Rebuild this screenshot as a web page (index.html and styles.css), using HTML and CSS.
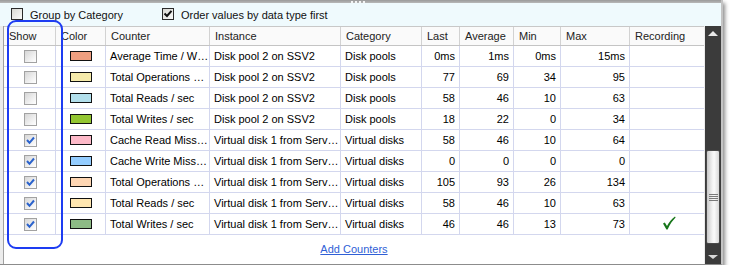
FILE: index.html
```html
<!DOCTYPE html>
<html>
<head>
<meta charset="utf-8">
<link rel="stylesheet" href="styles.css">
</head>
<body>
<div class="window">
  <div class="topbar"><span class="grip"><i></i><i></i><i></i><i></i></span></div>
  <div class="options">
    <label class="opt"><span class="ocb"></span>Group by Category</label>
    <label class="opt opt2"><span class="ocb"><svg width="10" height="10" viewBox="0 0 10 10"><path d="M1.5 4.5 L4 7 L8.5 1.8" fill="none" stroke="#111" stroke-width="2"/></svg></span>Order values by data type first</label>
  </div>
  <div class="main">
    <div class="grid">
      <div class="row head">
        <div class="c">Show</div><div class="c">Color</div><div class="c">Counter</div><div class="c">Instance</div><div class="c">Category</div><div class="c">Last</div><div class="c">Average</div><div class="c">Min</div><div class="c">Max</div><div class="c">Recording</div>
      </div>
      <div class="row">
        <div class="c show"><span class="cb"></span></div><div class="c color"><span class="sw sw1"></span></div><div class="c">Average Time / W…</div><div class="c">Disk pool 2 on SSV2</div><div class="c">Disk pools</div><div class="c n">0ms</div><div class="c n">1ms</div><div class="c n">0ms</div><div class="c n">15ms</div><div class="c"></div>
      </div>
      <div class="row">
        <div class="c show"><span class="cb"></span></div><div class="c color"><span class="sw sw2"></span></div><div class="c">Total Operations …</div><div class="c">Disk pool 2 on SSV2</div><div class="c">Disk pools</div><div class="c n">77</div><div class="c n">69</div><div class="c n">34</div><div class="c n">95</div><div class="c"></div>
      </div>
      <div class="row">
        <div class="c show"><span class="cb"></span></div><div class="c color"><span class="sw sw3"></span></div><div class="c">Total Reads / sec</div><div class="c">Disk pool 2 on SSV2</div><div class="c">Disk pools</div><div class="c n">58</div><div class="c n">46</div><div class="c n">10</div><div class="c n">63</div><div class="c"></div>
      </div>
      <div class="row">
        <div class="c show"><span class="cb"></span></div><div class="c color"><span class="sw sw4"></span></div><div class="c">Total Writes / sec</div><div class="c">Disk pool 2 on SSV2</div><div class="c">Disk pools</div><div class="c n">18</div><div class="c n">22</div><div class="c n">0</div><div class="c n">34</div><div class="c"></div>
      </div>
      <div class="row">
        <div class="c show"><span class="cb on"><svg width="11" height="11" viewBox="0 0 11 11"><path d="M2 5 L4.5 7.8 L9 2.5" fill="none" stroke="#2a62cc" stroke-width="2"/></svg></span></div><div class="c color"><span class="sw sw5"></span></div><div class="c">Cache Read Miss…</div><div class="c">Virtual disk 1 from Serv…</div><div class="c">Virtual disks</div><div class="c n">58</div><div class="c n">46</div><div class="c n">10</div><div class="c n">64</div><div class="c"></div>
      </div>
      <div class="row">
        <div class="c show"><span class="cb on"><svg width="11" height="11" viewBox="0 0 11 11"><path d="M2 5 L4.5 7.8 L9 2.5" fill="none" stroke="#2a62cc" stroke-width="2"/></svg></span></div><div class="c color"><span class="sw sw6"></span></div><div class="c">Cache Write Miss…</div><div class="c">Virtual disk 1 from Serv…</div><div class="c">Virtual disks</div><div class="c n">0</div><div class="c n">0</div><div class="c n">0</div><div class="c n">0</div><div class="c"></div>
      </div>
      <div class="row">
        <div class="c show"><span class="cb on"><svg width="11" height="11" viewBox="0 0 11 11"><path d="M2 5 L4.5 7.8 L9 2.5" fill="none" stroke="#2a62cc" stroke-width="2"/></svg></span></div><div class="c color"><span class="sw sw7"></span></div><div class="c">Total Operations …</div><div class="c">Virtual disk 1 from Serv…</div><div class="c">Virtual disks</div><div class="c n">105</div><div class="c n">93</div><div class="c n">26</div><div class="c n">134</div><div class="c"></div>
      </div>
      <div class="row">
        <div class="c show"><span class="cb on"><svg width="11" height="11" viewBox="0 0 11 11"><path d="M2 5 L4.5 7.8 L9 2.5" fill="none" stroke="#2a62cc" stroke-width="2"/></svg></span></div><div class="c color"><span class="sw sw8"></span></div><div class="c">Total Reads / sec</div><div class="c">Virtual disk 1 from Serv…</div><div class="c">Virtual disks</div><div class="c n">58</div><div class="c n">46</div><div class="c n">10</div><div class="c n">63</div><div class="c"></div>
      </div>
      <div class="row">
        <div class="c show"><span class="cb on"><svg width="11" height="11" viewBox="0 0 11 11"><path d="M2 5 L4.5 7.8 L9 2.5" fill="none" stroke="#2a62cc" stroke-width="2"/></svg></span></div><div class="c color"><span class="sw sw9"></span></div><div class="c">Total Writes / sec</div><div class="c">Virtual disk 1 from Serv…</div><div class="c">Virtual disks</div><div class="c n">46</div><div class="c n">46</div><div class="c n">13</div><div class="c n">73</div><div class="c rec"><svg width="14" height="14" viewBox="0 0 14 14"><path d="M1 7.6 L2.8 6.6 L5 10 C7 6.2 9.6 3 13 0.6 L13.6 1.4 C10.6 4.4 8 8 5.6 13.4 L4.4 13.4 Z" fill="#17761a"/></svg></div>
      </div>
      <div class="footer"><a href="#">Add Counters</a></div>
    </div>
    <div class="scrollbar">
      <div class="sb-btn"><span class="tri up"></span></div>
      <div class="sb-track"><div class="thumb"><span class="gripl"></span></div></div>
      <div class="sb-btn"><span class="tri down"></span></div>
    </div>
  </div>
  <div class="highlight"></div>
</div>
</body>
</html>
```

FILE: styles.css
```css
* { box-sizing: border-box; }
html, body { margin: 0; padding: 0; background: #fff; }
body {
  font-family: "Liberation Sans", Arial, sans-serif;
  font-size: 11px;
  color: #000;
}
.window {
  position: relative;
  width: 723px;
  height: 265px;
  background: #ececec;
  border-right: 2px solid #c4c4c4;
  border-bottom: 1px solid #8c8c8c;
  box-shadow: 2px 3px 4px rgba(0,0,0,0.45);
  display: flex;
  flex-direction: column;
}
.topbar {
  height: 3px;
  background: linear-gradient(#9a9a9a, #b8b8b8);
  display: flex;
  justify-content: center;
}
.grip {
  display: flex;
  gap: 2px;
  padding-top: 1px;
  margin-left: -6px;
}
.grip i {
  display: block;
  width: 2px;
  height: 2px;
  background: #f4f4f4;
}
.options {
  height: 23px;
  background: #effafd;
  display: flex;
  align-items: center;
  padding-left: 11px;
  padding-top: 1px;
}
.opt {
  display: flex;
  align-items: center;
  gap: 7px;
  color: #111;
}
.opt2 { margin-left: 39px; }
.ocb {
  width: 12px;
  height: 12px;
  border: 1px solid #2a2a2a;
  background: linear-gradient(135deg, #d8d8d2, #fafafa);
  display: flex;
  align-items: center;
  justify-content: center;
  margin-top: -3px;
}
.main {
  display: flex;
  height: 238px;
  padding-left: 3px;
}
.grid {
  width: 701px;
  border-left: 1px solid #a0a0a0;
  background: #fff;
  display: flex;
  flex-direction: column;
}
.row {
  display: grid;
  grid-template-columns: 52px 50px 104px 131px 81px 38px 54px 47px 69px 74px;
  height: 21px;
  border-bottom: 1px solid #d3d7ee;
}
.row.head {
  height: 20px;
  background: #fafafa;
  border-top: 1px solid #c8c8c8;
  border-bottom: 1px solid #c4c4c4;
  color: #222;
}
.c {
  border-right: 1px solid #d3d7ee;
  padding: 0 4px;
  line-height: 20px;
  white-space: nowrap;
  overflow: hidden;
}
.head .c {
  border-right-color: #d2d2d2;
  line-height: 18px;
  padding-left: 5px;
}
.c:last-child { border-right: none; }
.c.n { text-align: right; }
.c.show, .c.color, .c.rec {
  display: flex;
  align-items: center;
  justify-content: center;
}
.c.show { padding-left: 6px; }
.cb {
  width: 13px;
  height: 13px;
  border: 1px solid #a2a2a2;
  background: linear-gradient(135deg, #d6d6d6, #f4f4f4 70%, #fff);
  display: flex;
  align-items: center;
  justify-content: center;
}
.sw {
  width: 22px;
  height: 10px;
  border: 1px solid #111;
  margin-left: 1px;
}
.sw1 { background: #ee9f80; }
.sw2 { background: #f5eaaa; }
.sw3 { background: #b2dfeb; }
.sw4 { background: #93c632; }
.sw5 { background: #fdb9c8; }
.sw6 { background: #94cdff; }
.sw7 { background: #fed6b3; }
.sw8 { background: #ffe6b0; }
.sw9 { background: #8dbb85; }
.c.rec { padding-left: 8px; padding-bottom: 2px; }
.footer {
  flex: 1;
  display: flex;
  align-items: center;
  justify-content: center;
  padding-bottom: 1px;
}
.footer a {
  color: #2f5fd6;
  text-decoration: underline;
}
.scrollbar {
  width: 17px;
  background: #3b3b3b;
  display: flex;
  flex-direction: column;
  margin-left: 1px;
}
.sb-btn {
  height: 17px;
  display: flex;
  align-items: center;
  justify-content: center;
}
.tri {
  width: 0;
  height: 0;
  border-left: 5px solid transparent;
  border-right: 5px solid transparent;
}
.tri.up { border-bottom: 5px solid #e8e8e8; margin-top: -2px; }
.tri.down { border-top: 4px solid #d8d8d8; margin-top: 2px; }
.sb-track {
  flex: 1;
  display: flex;
  flex-direction: column;
  justify-content: flex-end;
  padding: 0 1px 3px 1px;
}
.thumb {
  height: 94px;
  border: 1px solid #4a4a4a;
  border-radius: 2px;
  background: linear-gradient(90deg, #c9c9c9, #f2f2f2 45%, #fafafa 60%, #d8d8d8);
  display: flex;
  align-items: center;
  justify-content: center;
}
.gripl {
  width: 9px;
  height: 7px;
  background: repeating-linear-gradient(#7a7a7a 0 1px, transparent 1px 2px);
}
.highlight {
  position: absolute;
  left: 7px;
  top: 20px;
  width: 56px;
  height: 229px;
  border: 2px solid #1d3cf2;
  border-radius: 9px;
  pointer-events: none;
}
```
